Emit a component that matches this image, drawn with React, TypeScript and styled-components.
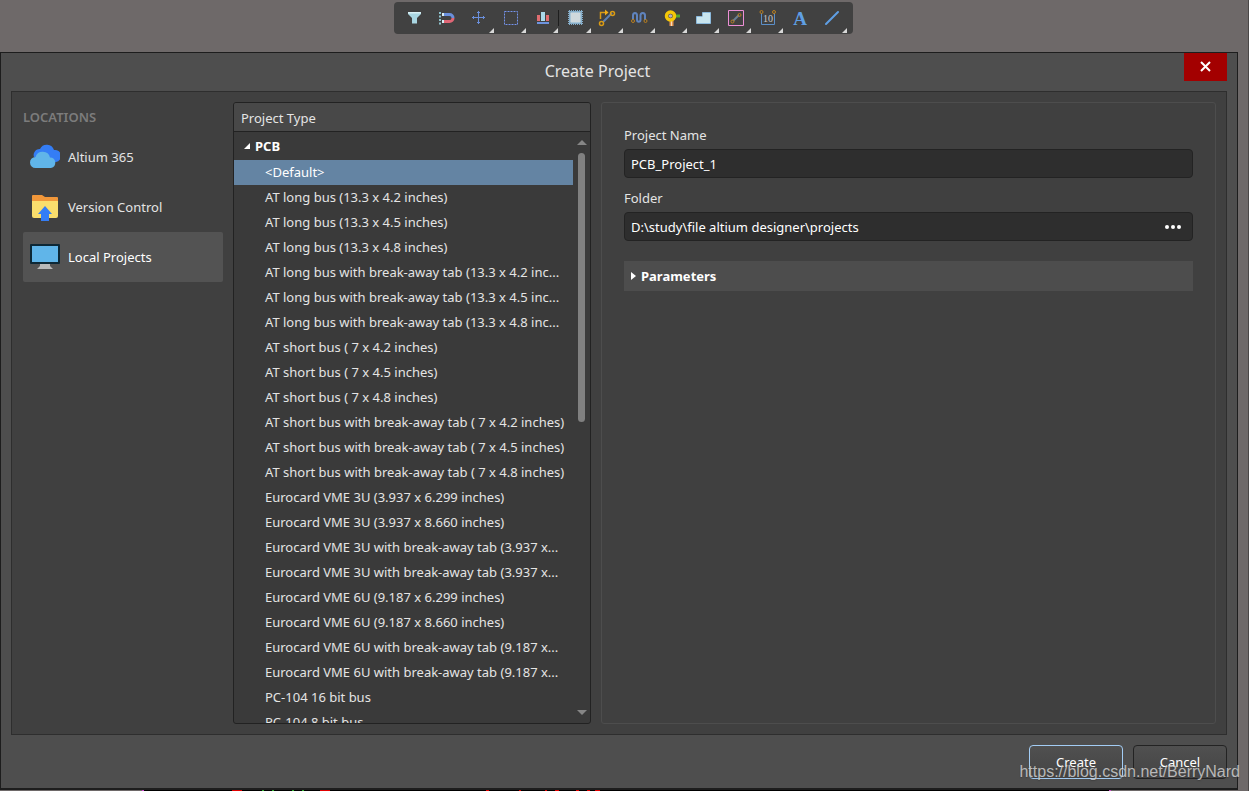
import React from "react";
import styled, { createGlobalStyle } from "styled-components";

const GlobalStyle = createGlobalStyle`
  *, *::before, *::after { box-sizing: border-box; }
  body { margin: 0; background: #6e6969; }
  body, button, input {
    font-family: "Noto Sans", "Open Sans", sans-serif;
    font-size: 13px;
    line-height: 18px;
    color: #e4e4e4;
  }
  button { margin: 0; padding: 0; border: 0; background: none; cursor: pointer; }
  h1, h2, ul { margin: 0; padding: 0; font-size: inherit; font-weight: inherit; }
  ul { list-style: none; }
`;

const Screen = styled.div`
  position: relative;
  display: flex;
  flex-direction: column;
  height: 100vh;
  min-height: 480px;
  border-right: 1px solid #4b4848;
  overflow: hidden;
`;

const ToolbarArea = styled.div`
  display: flex;
  justify-content: center;
  flex: none;
  height: 52px;
  padding: 2px 2px 0 0;
`;

const Toolbar = styled.div`
  display: flex;
  align-items: center;
  height: 32px;
  padding: 0 6px 0 4px;
  border-radius: 4px;
  background: #414141;
`;

const ToolButton = styled.button<{ $menu?: boolean }>`
  position: relative;
  display: flex;
  align-items: center;
  justify-content: center;
  width: 32px;
  height: 32px;

  &::after {
    content: "";
    display: ${(p) => (p.$menu ? "block" : "none")};
    position: absolute;
    right: 0;
    bottom: 1px;
    border-style: solid;
    border-width: 0 0 5px 5px;
    border-color: transparent transparent #d8d8d8 transparent;
  }
`;

const ToolDivider = styled.span`
  width: 1px;
  height: 16px;
  background: #1e1e1e;
`;

const Dialog = styled.section`
  display: flex;
  flex-direction: column;
  flex: 1;
  min-height: 0;
  margin-right: 10px;
  padding: 0 10px 9px;
  border: 1px solid #1d1d1d;
  border-bottom-width: 2px;
  background: #4e4e4e;
`;

const TitleBar = styled.header`
  display: flex;
  align-items: flex-start;
  flex: none;
  height: 38px;
`;

const Title = styled.h1`
  flex: 1;
  padding-top: 8px;
  font-size: 16px;
  line-height: 20px;
  text-align: center;
`;

const CloseButton = styled.button`
  display: flex;
  align-items: center;
  justify-content: center;
  width: 43px;
  height: 28px;
  background: #a30000;
`;

const Body = styled.div`
  display: grid;
  grid-template-columns: 200px 358px minmax(0, 1fr);
  grid-template-rows: minmax(0, 1fr);
  column-gap: 10px;
  flex: 1;
  min-height: 0;
  padding: 10px 10px 10px 11px;
  border: 1px solid #2e2e2e;
  background: #404040;
`;

const Locations = styled.nav`
  padding-top: 6px;
`;

const LocationsTitle = styled.h2`
  height: 24px;
  font-weight: 600;
  color: #7c7c7c;
`;

const LocationButton = styled.button<{ $active?: boolean }>`
  display: flex;
  align-items: center;
  gap: 8px;
  width: 100%;
  height: 50px;
  padding: 0 7px;
  border-radius: 2px;
  background: ${(p) => (p.$active ? "#535353" : "transparent")};
  color: ${(p) => (p.$active ? "#ffffff" : "#e4e4e4")};
`;

const TypePanel = styled.section`
  display: flex;
  flex-direction: column;
  min-height: 0;
  border: 1px solid #222222;
  border-radius: 3px;
  background: #3a3a3a;
  overflow: hidden;
`;

const TypeHeader = styled.h2`
  flex: none;
  height: 29px;
  padding: 6px 7px;
  border-bottom: 1px solid #222222;
  background: #484848;
`;

const TypeContent = styled.div`
  display: flex;
  flex: 1;
  min-height: 0;
`;

const TypeList = styled.div`
  flex: 1;
  min-width: 0;
  overflow: hidden;
`;

const GroupButton = styled.button`
  display: flex;
  align-items: center;
  gap: 5px;
  width: 100%;
  height: 28px;
  padding-left: 10px;
  font-weight: 700;
  color: #ffffff;
`;

const TypeRow = styled.button<{ $selected?: boolean }>`
  display: block;
  width: 100%;
  height: 25px;
  padding: 0 0 2px 31px;
  text-align: left;
  white-space: pre;
  background: ${(p) => (p.$selected ? "#6484a3" : "transparent")};
  color: ${(p) => (p.$selected ? "#ffffff" : "#e4e4e4")};
`;

const Scrollbar = styled.div`
  display: flex;
  flex-direction: column;
  align-items: center;
  width: 17px;
  padding: 8px 0;
`;

const ScrollTrack = styled.div`
  flex: 1;
  width: 7px;
  margin: 8px 0;
`;

const ScrollThumb = styled.div`
  height: 49%;
  border-radius: 4px;
  background: #808080;
`;

const ScrollArrow = styled.span<{ $down?: boolean }>`
  border-style: solid;
  border-color: #868686 transparent;
  border-width: ${(p) => (p.$down ? "5px 5px 0" : "0 5px 5px")};
`;

const Details = styled.section`
  display: flex;
  flex-direction: column;
  padding: 23px 22px;
  border: 1px solid #4d4d4d;
  border-radius: 3px;
`;

const FieldLabel = styled.label`
  height: 23px;
`;

const FieldBox = styled.div`
  display: flex;
  align-items: center;
  height: 29px;
  margin-bottom: 11px;
  border: 1px solid #232323;
  border-radius: 4px;
  background: #2e2e2e;
`;

const FieldInput = styled.input`
  flex: 1;
  min-width: 0;
  height: 100%;
  padding: 0 6px;
  border: 0;
  outline: 0;
  background: transparent;
  color: #ffffff;
`;

const BrowseButton = styled.button`
  display: flex;
  align-items: center;
  justify-content: center;
  width: 38px;
  height: 100%;
`;

const ParametersButton = styled.button`
  display: flex;
  align-items: center;
  gap: 5px;
  height: 30px;
  margin-top: 9px;
  padding-left: 7px;
  background: #4d4d4d;
  font-weight: 700;
  color: #ffffff;
`;

const Footer = styled.footer`
  display: flex;
  justify-content: flex-end;
  flex: none;
  gap: 10px;
  padding-top: 10px;
`;

const FooterButton = styled.button<{ $primary?: boolean }>`
  width: 94px;
  height: 34px;
  border: 1px solid ${(p) => (p.$primary ? "#a3cdf5" : "#232323")};
  border-radius: 4px;
  background: linear-gradient(#505050, #444444);
  color: #ffffff;
`;

const BoardEdge = styled.svg`
  display: block;
  flex: none;
  width: 100%;
  height: 1px;
`;

const Watermark = styled.span`
  position: absolute;
  right: 8px;
  bottom: 9px;
  font-family: "Liberation Sans", sans-serif;
  font-size: 16px;
  line-height: 20px;
  color: rgba(225, 225, 225, 0.75);
  text-shadow: 0 1px 1px rgba(50, 50, 50, 0.5);
  pointer-events: none;
`;

const ToolIcon = ({ children }: { children: React.ReactNode }) => (
  <svg width="24" height="24" viewBox="0 0 24 24" fill="none" aria-hidden="true">
    {children}
  </svg>
);

const chipPins = [6.5, 8.5, 10.5, 12.5, 14.5, 16.5, 18.5];

const tools: { name: string; menu?: boolean; divider?: boolean; art: React.ReactNode }[] = [
  {
    name: "Filter",
    art: (
      <>
        <path d="M6 6h13v2l-4 4v5.500h-5V12L6 8z" fill="#a9d6e2" />
        <path d="M6 6h13v1.500H6z" fill="#d9f0f5" />
      </>
    ),
  },
  {
    name: "Snap",
    art: (
      <>
        <path d="M10 8.500h5.500a3.500 3.500 0 0 1 3.500 3.500" stroke="#6a8fdc" strokeWidth="3" />
        <path d="M10 15.500h5.500a3.500 3.500 0 0 0 3.500-3.500" stroke="#df6675" strokeWidth="3" />
        <path d="M8 7h2v3H8zM8 14h2v3H8z" fill="#d5eef4" />
        <path d="M5 6h2v2H5zM5 9.500h2v2H5zM5 13h2v2H5zM5 16.500h2v2H5z" fill="#8ec3ce" />
      </>
    ),
  },
  { name: "Place origin", menu: true, art: <path d="M12.500 5v13M6 11.500h13M11 6.500h3M11 16.500h3M7.500 10v3M17.500 10v3" stroke="#6a8fdc" /> },
  { name: "Select area", menu: true, art: <path d="M6.500 5.500h13v13h-13z" stroke="#7593ea" strokeDasharray="2 1" /> },
  {
    name: "Align",
    menu: true,
    art: (
      <>
        <path d="M7 9h3v6H7zM16 9h3v6h-3z" fill="#e06d70" />
        <path d="M11 6h4v9h-4z" fill="#a9d9ea" />
        <path d="M7 16h12v2H7z" fill="#6e94df" />
      </>
    ),
  },
  {
    name: "Place component",
    menu: true,
    divider: true,
    art: (
      <>
        {chipPins.map((p) => (
          <path key={p} d={`M${p} 4v15M5 ${p - 1}h15`} stroke="#86aeca" />
        ))}
        <path d="M7.500 6.500h10v10h-10z" fill="#d0d9dd" stroke="#a9c6d8" />
      </>
    ),
  },
  {
    name: "Route",
    menu: true,
    art: (
      <>
        <path d="M8 16l9-9" stroke="#5b80b5" strokeWidth="2" />
        <path d="M5.500 13V6.500H12" stroke="#d99a14" strokeWidth="1.500" />
        <path d="M10 3.500v6l3.500-3z" fill="#efac18" />
        <circle cx="6.500" cy="17.500" r="2" stroke="#d99a14" strokeWidth="1.500" />
        <circle cx="17.500" cy="7.500" r="2" stroke="#d99a14" strokeWidth="1.500" />
      </>
    ),
  },
  {
    name: "Tune length",
    menu: true,
    art: (
      <>
        <path d="M6 14V9.500c0-3.500 4-3.500 4 0v4c0 3 3.500 3 3.500 0v-4c0-3.500 4.500-3.500 4.500 0V14" stroke="#5f83bd" strokeWidth="2" />
        <circle cx="6" cy="15" r="1.500" stroke="#b97f1f" />
        <circle cx="18.500" cy="15" r="1.500" stroke="#b97f1f" />
      </>
    ),
  },
  {
    name: "Place via",
    menu: true,
    art: (
      <>
        <path d="M14 8.500h7v3h-7z" fill="#52a52b" />
        <path d="M10.500 14h4v6h-4z" fill="#e59552" />
        <path d="M12 14h1v6h-1z" fill="#f3ddbf" />
        <circle cx="11.500" cy="10" r="4" stroke="#f4c708" strokeWidth="3.500" />
        <circle cx="11.500" cy="10" r="1.800" fill="#bcaeb2" />
      </>
    ),
  },
  { name: "Place polygon", menu: true, art: <path d="M5.500 10.500h5q1 0 1-1v-3h8v11h-14z" fill="#c9e5ee" stroke="#8bb9dc" /> },
  {
    name: "Place room",
    menu: true,
    art: (
      <>
        <path d="M5.500 4.500h15v15h-15z" stroke="#ee8fd6" />
        <path d="M10 15l6-6" stroke="#6b7f95" strokeWidth="2" />
        <circle cx="9.500" cy="15.500" r="1.500" stroke="#b97f1f" />
        <circle cx="16.500" cy="9" r="1.500" stroke="#b97f1f" />
      </>
    ),
  },
  {
    name: "Place dimension",
    menu: true,
    art: (
      <>
        <path d="M6.500 7v11.500h13V7" stroke="#5b8fc9" />
        <circle cx="6.500" cy="6" r="1.500" stroke="#b97f1f" />
        <circle cx="19" cy="6" r="1.500" stroke="#b97f1f" />
        <text x="13" y="16" textAnchor="middle" fontFamily="Liberation Serif" fontSize="10" fill="#c9c9c9">10</text>
      </>
    ),
  },
  {
    name: "Place text",
    art: (
      <text x="13" y="19" textAnchor="middle" fontFamily="Liberation Serif" fontWeight="700" fontSize="19" fill="#5f9fe4">A</text>
    ),
  },
  { name: "Place line", menu: true, art: <path d="M7 18L19 6" stroke="#5f9fe4" strokeWidth="2" strokeLinecap="round" /> },
];

const CloudIcon = () => (
  <svg width="30" height="30" viewBox="0 0 30 30" aria-hidden="true">
    <path d="M4 15a6 6 0 0 1 6-8 7.500 7.500 0 0 1 14 1 6 6 0 0 1 2 12l-4 1z" fill="#347df5" />
    <path d="M5.500 26a5.500 5.500 0 0 1 0-11A7.500 7.500 0 0 1 20 15.500 5.300 5.300 0 0 1 21 26z" fill="#60b5e9" />
  </svg>
);

const FolderIcon = () => (
  <svg width="30" height="30" viewBox="0 0 30 30" aria-hidden="true">
    <path d="M2 9V4a1 1 0 0 1 1-1h9l3 2h12a1 1 0 0 1 1 1v4z" fill="#f1973a" />
    <path d="M2 9h26v15a2 2 0 0 1-2 2H4a2 2 0 0 1-2-2z" fill="#fade6d" />
    <path d="M15 14l7 8h-3v7h-8v-7H8z" fill="#347df5" />
  </svg>
);

const MonitorIcon = () => (
  <svg width="30" height="30" viewBox="0 0 30 30" aria-hidden="true">
    <path d="M10 22h10v2l3 3H7l3-3z" fill="#b9b9b9" />
    <rect y="2" width="30" height="20" rx="1" fill="#0d2836" />
    <path d="M2 4h26v16H2z" fill="#60b5e9" />
  </svg>
);

const locations = [
  { name: "Altium 365", icon: <CloudIcon /> },
  { name: "Version Control", icon: <FolderIcon /> },
  { name: "Local Projects", icon: <MonitorIcon />, active: true },
];

const projectTypes = [
  "<Default>",
  "AT long bus (13.3 x 4.2 inches)",
  "AT long bus (13.3 x 4.5 inches)",
  "AT long bus (13.3 x 4.8 inches)",
  "AT long bus with break-away tab (13.3 x 4.2 inc...",
  "AT long bus with break-away tab (13.3 x 4.5 inc...",
  "AT long bus with break-away tab (13.3 x 4.8 inc...",
  "AT short bus ( 7 x 4.2 inches)",
  "AT short bus ( 7 x 4.5 inches)",
  "AT short bus ( 7 x 4.8 inches)",
  "AT short bus with break-away tab ( 7 x 4.2 inches)",
  "AT short bus with break-away tab ( 7 x 4.5 inches)",
  "AT short bus with break-away tab ( 7 x 4.8 inches)",
  "Eurocard VME 3U (3.937 x 6.299 inches)",
  "Eurocard VME 3U (3.937 x 8.660 inches)",
  "Eurocard VME 3U with break-away tab (3.937 x...",
  "Eurocard VME 3U with break-away tab (3.937 x...",
  "Eurocard VME 6U (9.187 x 6.299 inches)",
  "Eurocard VME 6U (9.187 x 8.660 inches)",
  "Eurocard VME 6U with break-away tab (9.187 x...",
  "Eurocard VME 6U with break-away tab (9.187 x...",
  "PC-104 16 bit bus",
  "PC-104 8 bit bus",
];

const boardMarks: [number, number, string][] = [
  [142, 2, "#d04ad0"],
  [232, 10, "#e00000"],
  [262, 2, "#30b030"],
  [272, 2, "#30b030"],
  [292, 2, "#30b030"],
  [302, 2, "#30b030"],
  [320, 10, "#e00000"],
  [486, 3, "#e00000"],
  [519, 2, "#e00000"],
  [545, 2, "#e00000"],
  [555, 4, "#e00000"],
  [576, 3, "#e00000"],
  [587, 3, "#e00000"],
  [595, 5, "#e00000"],
  [1109, 2, "#d04ad0"],
];

export default function App() {
  return (
    <Screen>
      <GlobalStyle />
      <ToolbarArea>
        <Toolbar role="toolbar" aria-label="Active bar">
          {tools.map((t) => (
            <React.Fragment key={t.name}>
              {t.divider && <ToolDivider />}
              <ToolButton type="button" aria-label={t.name} $menu={t.menu}>
                <ToolIcon>{t.art}</ToolIcon>
              </ToolButton>
            </React.Fragment>
          ))}
        </Toolbar>
      </ToolbarArea>

      <Dialog role="dialog" aria-labelledby="dialog-title">
        <TitleBar>
          <Title id="dialog-title">Create Project</Title>
          <CloseButton type="button" aria-label="Close">
            <svg width="12" height="12" viewBox="0 0 12 12" aria-hidden="true">
              <path d="M1 1l9 9M10 1L1 10" stroke="#fff" strokeWidth="2" />
            </svg>
          </CloseButton>
        </TitleBar>

        <Body>
          <Locations>
            <LocationsTitle>LOCATIONS</LocationsTitle>
            {locations.map((l) => (
              <LocationButton key={l.name} type="button" $active={l.active}>
                {l.icon}
                {l.name}
              </LocationButton>
            ))}
          </Locations>

          <TypePanel>
            <TypeHeader>Project Type</TypeHeader>
            <TypeContent>
              <TypeList>
                <GroupButton type="button" aria-expanded="true">
                  <svg width="6" height="6" viewBox="0 0 6 6" aria-hidden="true">
                    <path d="M6 0v6H0z" fill="#fff" />
                  </svg>
                  PCB
                </GroupButton>
                <ul>
                  {projectTypes.map((name, i) => (
                    <li key={i}>
                      <TypeRow type="button" $selected={i === 0}>{name}</TypeRow>
                    </li>
                  ))}
                </ul>
              </TypeList>
              <Scrollbar>
                <ScrollArrow />
                <ScrollTrack>
                  <ScrollThumb />
                </ScrollTrack>
                <ScrollArrow $down />
              </Scrollbar>
            </TypeContent>
          </TypePanel>

          <Details>
            <FieldLabel htmlFor="project-name">Project Name</FieldLabel>
            <FieldBox>
              <FieldInput id="project-name" type="text" defaultValue="PCB_Project_1" />
            </FieldBox>
            <FieldLabel htmlFor="folder">Folder</FieldLabel>
            <FieldBox>
              <FieldInput id="folder" type="text" defaultValue="D:\study\file altium designer\projects" />
              <BrowseButton type="button" aria-label="Browse">
                <svg width="16" height="4" viewBox="0 0 16 4" fill="#fff" aria-hidden="true">
                  <circle cx="2" cy="2" r="2" />
                  <circle cx="8" cy="2" r="2" />
                  <circle cx="14" cy="2" r="2" />
                </svg>
              </BrowseButton>
            </FieldBox>
            <ParametersButton type="button" aria-expanded="false">
              <svg width="5" height="8" viewBox="0 0 5 8" aria-hidden="true">
                <path d="M0 0l5 4-5 4z" fill="#fff" />
              </svg>
              Parameters
            </ParametersButton>
          </Details>
        </Body>

        <Footer>
          <FooterButton type="button" $primary>Create</FooterButton>
          <FooterButton type="button">Cancel</FooterButton>
        </Footer>
      </Dialog>

      <BoardEdge viewBox="0 0 1248 1" preserveAspectRatio="none" aria-hidden="true">
        <rect x="144" width="966" height="1" fill="#000" />
        {boardMarks.map(([x, w, fill]) => (
          <rect key={x} x={x} width={w} height="1" fill={fill} />
        ))}
      </BoardEdge>
      <Watermark>https://blog.csdn.net/BerryNard</Watermark>
    </Screen>
  );
}
